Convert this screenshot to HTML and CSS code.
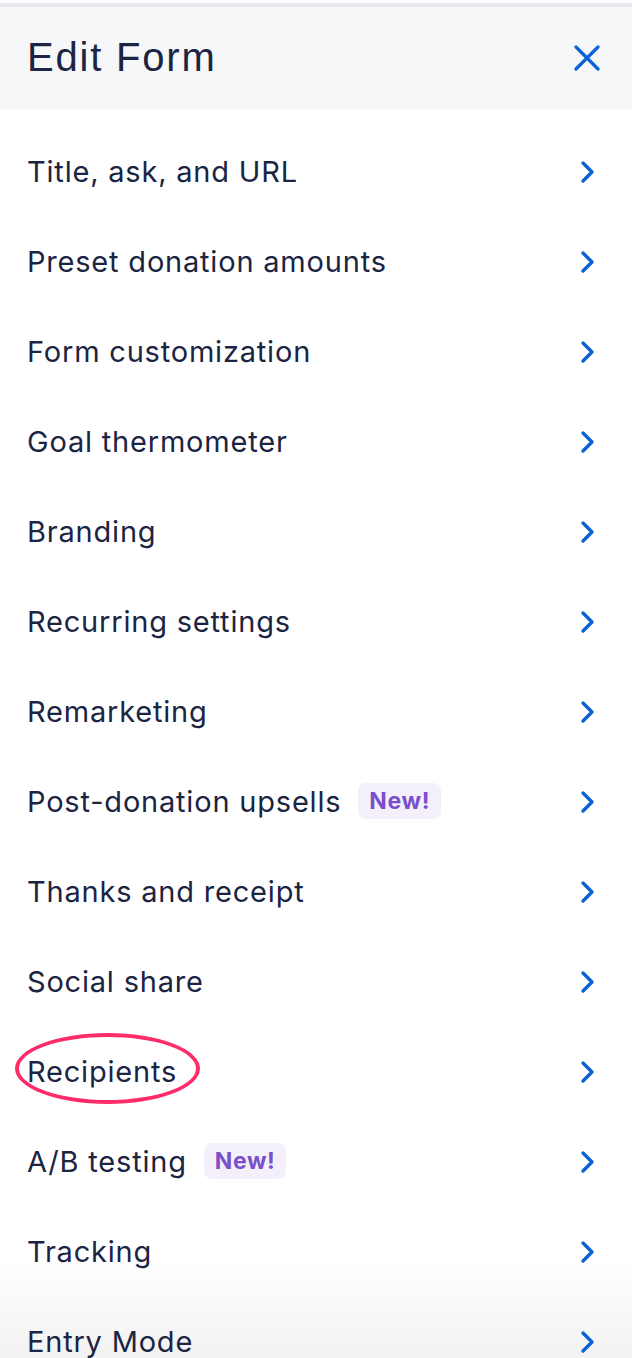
FILE: index.html
```html
<!DOCTYPE html>
<html>
<head>
<meta charset="utf-8">
<link rel="stylesheet" href="styles.css">
</head>
<body>
<div class="panel">
  <div class="fade"></div>
  <div class="topline"></div>
  <header class="head">
    <h1 class="title">Edit Form</h1>
    <svg class="close" width="26" height="26" viewBox="0 0 26 26"><path d="M2 2 L24 24 M24 2 L2 24" stroke="#0b62d6" stroke-width="3.2" stroke-linecap="round"/></svg>
  </header>
  <ul class="list">
    <li class="row"><span class="label">Title, ask, and URL</span><svg class="chev" width="16" height="24" viewBox="0 0 16 24"><path d="M3 3 L12 12 L3 21" fill="none" stroke="#0b62d6" stroke-width="3.4" stroke-linecap="round" stroke-linejoin="round"/></svg></li>
    <li class="row"><span class="label">Preset donation amounts</span><svg class="chev" width="16" height="24" viewBox="0 0 16 24"><path d="M3 3 L12 12 L3 21" fill="none" stroke="#0b62d6" stroke-width="3.4" stroke-linecap="round" stroke-linejoin="round"/></svg></li>
    <li class="row"><span class="label">Form customization</span><svg class="chev" width="16" height="24" viewBox="0 0 16 24"><path d="M3 3 L12 12 L3 21" fill="none" stroke="#0b62d6" stroke-width="3.4" stroke-linecap="round" stroke-linejoin="round"/></svg></li>
    <li class="row"><span class="label">Goal thermometer</span><svg class="chev" width="16" height="24" viewBox="0 0 16 24"><path d="M3 3 L12 12 L3 21" fill="none" stroke="#0b62d6" stroke-width="3.4" stroke-linecap="round" stroke-linejoin="round"/></svg></li>
    <li class="row"><span class="label">Branding</span><svg class="chev" width="16" height="24" viewBox="0 0 16 24"><path d="M3 3 L12 12 L3 21" fill="none" stroke="#0b62d6" stroke-width="3.4" stroke-linecap="round" stroke-linejoin="round"/></svg></li>
    <li class="row"><span class="label">Recurring settings</span><svg class="chev" width="16" height="24" viewBox="0 0 16 24"><path d="M3 3 L12 12 L3 21" fill="none" stroke="#0b62d6" stroke-width="3.4" stroke-linecap="round" stroke-linejoin="round"/></svg></li>
    <li class="row"><span class="label">Remarketing</span><svg class="chev" width="16" height="24" viewBox="0 0 16 24"><path d="M3 3 L12 12 L3 21" fill="none" stroke="#0b62d6" stroke-width="3.4" stroke-linecap="round" stroke-linejoin="round"/></svg></li>
    <li class="row"><span class="label">Post-donation upsells<span class="badge">New!</span></span><svg class="chev" width="16" height="24" viewBox="0 0 16 24"><path d="M3 3 L12 12 L3 21" fill="none" stroke="#0b62d6" stroke-width="3.4" stroke-linecap="round" stroke-linejoin="round"/></svg></li>
    <li class="row"><span class="label">Thanks and receipt</span><svg class="chev" width="16" height="24" viewBox="0 0 16 24"><path d="M3 3 L12 12 L3 21" fill="none" stroke="#0b62d6" stroke-width="3.4" stroke-linecap="round" stroke-linejoin="round"/></svg></li>
    <li class="row"><span class="label">Social share</span><svg class="chev" width="16" height="24" viewBox="0 0 16 24"><path d="M3 3 L12 12 L3 21" fill="none" stroke="#0b62d6" stroke-width="3.4" stroke-linecap="round" stroke-linejoin="round"/></svg></li>
    <li class="row"><span class="label">Recipients<span class="ring"></span></span><svg class="chev" width="16" height="24" viewBox="0 0 16 24"><path d="M3 3 L12 12 L3 21" fill="none" stroke="#0b62d6" stroke-width="3.4" stroke-linecap="round" stroke-linejoin="round"/></svg></li>
    <li class="row"><span class="label">A/B testing<span class="badge">New!</span></span><svg class="chev" width="16" height="24" viewBox="0 0 16 24"><path d="M3 3 L12 12 L3 21" fill="none" stroke="#0b62d6" stroke-width="3.4" stroke-linecap="round" stroke-linejoin="round"/></svg></li>
    <li class="row"><span class="label">Tracking</span><svg class="chev" width="16" height="24" viewBox="0 0 16 24"><path d="M3 3 L12 12 L3 21" fill="none" stroke="#0b62d6" stroke-width="3.4" stroke-linecap="round" stroke-linejoin="round"/></svg></li>
    <li class="row"><span class="label">Entry Mode</span><svg class="chev" width="16" height="24" viewBox="0 0 16 24"><path d="M3 3 L12 12 L3 21" fill="none" stroke="#0b62d6" stroke-width="3.4" stroke-linecap="round" stroke-linejoin="round"/></svg></li>
  </ul>
</div>
</body>
</html>
```

FILE: styles.css
```css
html, body {
  margin: 0;
  padding: 0;
  background: #ffffff;
}
body {
  font-family: Inter, "Liberation Sans", sans-serif;
  color: #1b2442;
  overflow: hidden;
}
.panel {
  position: relative;
  width: 632px;
  height: 1358px;
  overflow: hidden;
}
.topline {
  position: relative;
  height: 4px;
  margin-top: 3px;
  background: #e5e7ed;
}
.head {
  position: relative;
  display: flex;
  align-items: center;
  justify-content: space-between;
  height: 103px;
  padding: 0 32px 0 27px;
  background: #f6f7f9;
  box-sizing: border-box;
}
.title {
  margin: 0;
  font-family: "Liberation Sans", Arial, sans-serif;
  font-weight: 400;
  font-size: 40px;
  letter-spacing: 1.8px;
  color: #1b2442;
  margin-top: -2px;
}
.close {
  display: block;
  margin-top: -2px;
}
.list {
  position: relative;
  list-style: none;
  margin: 0;
  padding: 17px 0 0 0;
}
.row {
  display: flex;
  align-items: center;
  justify-content: space-between;
  height: 90px;
  padding: 0 36px 0 27px;
}
.label {
  position: relative;
  display: flex;
  align-items: center;
  font-size: 29px;
  letter-spacing: 0.8px;
  margin-top: -2px;
}
.chev {
  display: block;
}
.badge {
  margin-left: 17px;
  padding: 0 11px;
  height: 36px;
  line-height: 36px;
  border-radius: 8px;
  background: #f4f0fb;
  color: #7a4fcb;
  font-size: 23px;
  font-weight: 700;
  letter-spacing: 0.6px;
}
.ring {
  position: absolute;
  left: -12px;
  right: -23px;
  top: -21px;
  height: 63px;
  border: 4px solid #ff2c6a;
  border-radius: 50%;
}
.fade {
  position: absolute;
  left: 0;
  right: 0;
  bottom: 0;
  height: 100px;
  background: linear-gradient(to bottom, rgba(242,242,242,0), #f2f2f2);
}
```
